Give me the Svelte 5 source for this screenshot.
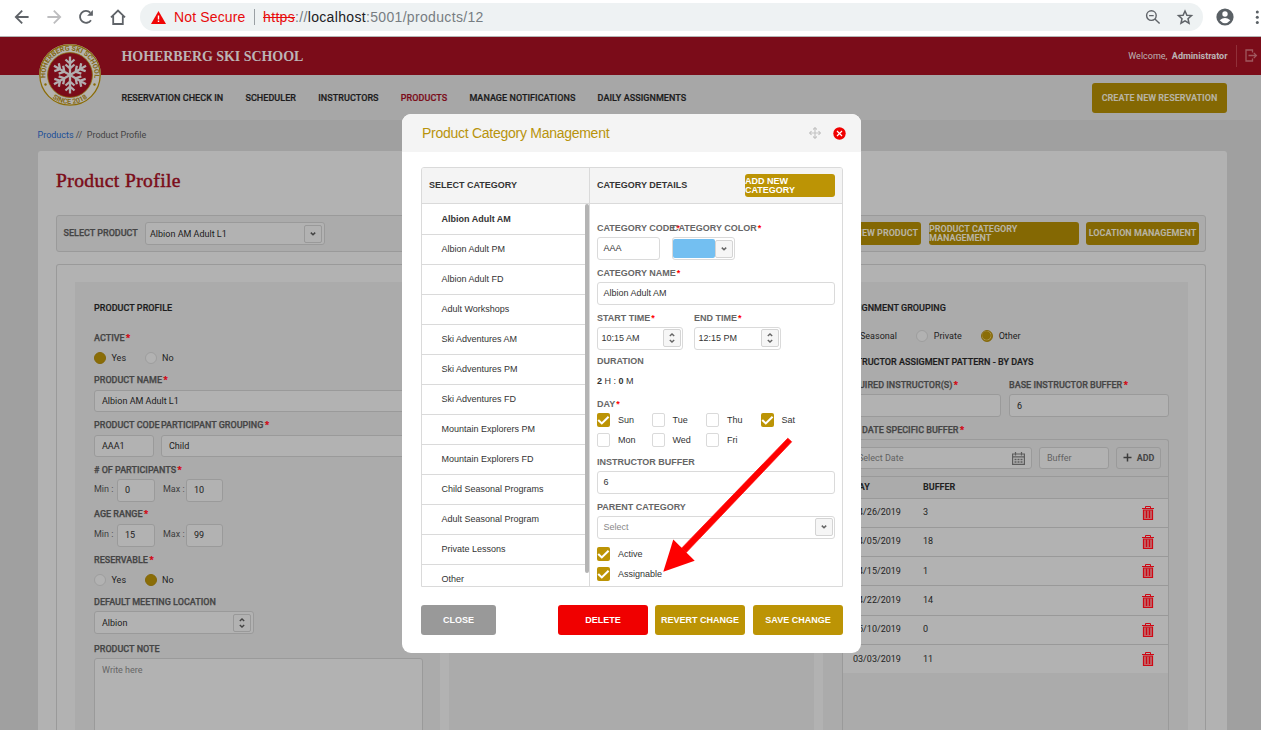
<script>
  const nav = [
    { label: 'RESERVATION CHECK IN' },
    { label: 'SCHEDULER' },
    { label: 'INSTRUCTORS' },
    { label: 'PRODUCTS', active: true },
    { label: 'MANAGE NOTIFICATIONS' },
    { label: 'DAILY ASSIGNMENTS' }
  ];
  const buffers = [
    ['04/26/2019', '3'],
    ['04/05/2019', '18'],
    ['04/15/2019', '1'],
    ['04/22/2019', '14'],
    ['05/10/2019', '0'],
    ['03/03/2019', '11']
  ];
  const categories = [
    'Albion Adult AM', 'Albion Adult PM', 'Albion Adult FD', 'Adult Workshops',
    'Ski Adventures AM', 'Ski Adventures PM', 'Ski Adventures FD', 'Mountain Explorers PM',
    'Mountain Explorers FD', 'Child Seasonal Programs', 'Adult Seasonal Program',
    'Private Lessons', 'Other'
  ];
  let selected = $state('Albion Adult AM');
  let days = $state([
    { name: 'Sun', on: true }, { name: 'Tue', on: false }, { name: 'Thu', on: false }, { name: 'Sat', on: true },
    { name: 'Mon', on: false }, { name: 'Wed', on: false }, { name: 'Fri', on: false }
  ]);
  const arms = [0, 60, 120, 180, 240, 300];
</script>

{#snippet label(text, required = true)}
  <div class="label">{text}{#if required}<b class="star">*</b>{/if}</div>
{/snippet}

{#snippet down()}
  <span class="knob"><svg width="8" height="6" viewBox="0 0 8 6"><path d="M1.8 1.6 4 3.7 6.2 1.6" fill="none" stroke="currentColor" stroke-width="1.5" /></svg></span>
{/snippet}

{#snippet updown()}
  <span class="knob"><svg width="8" height="12" viewBox="0 0 8 12"><path d="M1.8 4 4 1.900 6.2 4M1.8 8 4 10.1 6.2 8" fill="none" stroke="currentColor" stroke-width="1.4" /></svg></span>
{/snippet}

{#snippet radio(text, on, ring = false)}
  <span class="radio"><i class:on class:ring></i><span>{text}</span></span>
{/snippet}

{#snippet check(text, on)}
  <span class="check"><i class:on>
    {#if on}<svg width="13" height="14" viewBox="0 0 13 14"><path d="M1.2 6.900 4.800 10.400 11.600 3.800" fill="none" stroke="#fff" stroke-width="2.100" /></svg>{/if}
  </i><span>{text}</span></span>
{/snippet}

<div class="window">
  <div class="chrome">
    <svg class="tools" width="136" height="34" viewBox="0 0 136 34" fill="none" stroke="#5f6368" stroke-width="1.8">
      <path d="M28.6 17H16M22.2 10.6 15.8 17l6.4 6.4" />
      <path d="M47.4 17H60M53.8 10.6 60.2 17l-6.4 6.4" stroke="#bdbdbf" />
      <path d="M91 20.2a6 6 0 1 1-.7-7.6" />
      <path d="M92.9 10v5.8h-5.8z" fill="#5f6368" stroke="none" />
      <path d="M111 17.3 118 10.6l7 6.7M113.2 16v8h9.6v-8" />
    </svg>
    <div class="address">
      <svg width="15" height="13" viewBox="0 0 15 13"><path d="M7.5 0 15 13H0z" fill="#f00505" /><path d="M6.8 4.4h1.4v4H6.8zM6.8 9.6h1.4V11H6.8z" fill="#fff" /></svg>
      <span class="warn">Not Secure</span>
      <i class="bar"></i>
      <span class="url"><s>https</s>://<em>localhost</em>:5001/products/12</span>
      <svg class="right" width="50" height="20" viewBox="0 0 50 20" fill="none" stroke="#5f6368" stroke-width="1.4">
        <circle cx="6.4" cy="8.6" r="4.8" /><path d="m9.900 12 4.7 4.6M4.1 8.6h4.6" />
        <path d="m40 4 1.900 4.200 4.600.4-3.500 3.100 1 4.500-4-2.400-4 2.400 1-4.500-3.500-3.100 4.600-.4z" stroke-width="1.5" />
      </svg>
    </div>
    <svg width="58" height="34" viewBox="0 0 58 34" fill="#5a6065">
      <circle cx="22" cy="17" r="8.6" /><circle cx="22" cy="14" r="2.7" fill="#fff" /><path d="M16.7 20.2q5.3-4.6 10.6 0-5.300 6-10.6 0z" fill="#fff" />
      <circle cx="54.300" cy="12" r="1.5" /><circle cx="54.300" cy="17.2" r="1.5" /><circle cx="54.300" cy="22.500" r="1.5" />
    </svg>
  </div>

  <header>
    <svg class="logo" width="64" height="64" viewBox="-32 -32 64 64">
      <circle r="31" fill="#b5b3ae" /><circle r="30.2" fill="none" stroke="#8a6c08" stroke-width="1.3" />
      <circle r="22.400" fill="#7b0c19" stroke="#8a6c08" stroke-width=".8" />
      <path id="ring-top" d="M-24 5A24.500 24.500 0 1 1 24 5" fill="none" />
      <path id="ring-bottom" d="M-22 18.700A28.900 28.900 0 0 0 22 18.700" fill="none" />
      <text class="seal"><textPath href="#ring-top" startOffset="50%" text-anchor="middle">HOHERBERG SKI SCHOOL</textPath></text>
      <text class="seal"><textPath href="#ring-bottom" startOffset="50%" text-anchor="middle">SINCE 2018</textPath></text>
      <circle cx="-24.500" cy="9.500" r="1.200" fill="#8a6c08" /><circle cx="24.500" cy="9.500" r="1.200" fill="#8a6c08" />
      {#each arms as a}
        <path transform="rotate({a})" d="M0 0V-18.500M-4.500-15.500 0-11.500 4.500-15.500M-4.500-10.500 0-6.500 4.500-10.500" fill="none" stroke="#b2aeb0" stroke-width="2.300" />
      {/each}
    </svg>
    <span class="brand">HOHERBERG SKI SCHOOL</span>
    <span class="welcome">Welcome, &nbsp;<b>Administrator</b></span>
    <span class="exit">
      <svg width="13" height="13" viewBox="0 0 13 13" fill="none" stroke="#a0585f" stroke-width="1.300"><path d="M7.500 3.600V1H1v11h6.500V9.400M3.500 6.500H11M8.800 3.900l2.600 2.600-2.600 2.600" /></svg>
    </span>
  </header>

  <nav>
    {#each nav as item}<span class:active={item.active}>{item.label}</span>{/each}
    <button class="gold create">CREATE NEW RESERVATION</button>
  </nav>

  <main>
    <div class="crumbs"><a href="#products">Products</a> // &nbsp;Product Profile</div>
    <section class="card">
      <h1>Product Profile</h1>
      <div class="toolbar">
        <span class="label">SELECT PRODUCT</span>
        <div class="field product">Albion AM Adult L1{@render down()}</div>
        <button class="gold b1">ADD NEW PRODUCT</button>
        <button class="gold b2">PRODUCT CATEGORY MANAGEMENT</button>
        <button class="gold b3">LOCATION MANAGEMENT</button>
      </div>

      <div class="panel">
        <div class="col profile">
          <h2>PRODUCT PROFILE</h2>
          {@render label('ACTIVE')}
          <div class="radios">{@render radio('Yes', true)}{@render radio('No', false)}</div>
          {@render label('PRODUCT NAME')}
          <div class="field">Albion AM Adult L1</div>
          <div class="pair">{@render label('PRODUCT CODE', false)}{@render label('PARTICIPANT GROUPING')}</div>
          <div class="pair"><div class="field">AAA1</div><div class="field">Child</div></div>
          {@render label('# OF PARTICIPANTS')}
          <div class="range"><span>Min :</span><div class="field">0</div><span>Max :</span><div class="field">10</div></div>
          {@render label('AGE RANGE')}
          <div class="range"><span>Min :</span><div class="field">15</div><span>Max :</span><div class="field">99</div></div>
          {@render label('RESERVABLE')}
          <div class="radios">{@render radio('Yes', false)}{@render radio('No', true)}</div>
          {@render label('DEFAULT MEETING LOCATION', false)}
          <div class="field meeting">Albion{@render updown()}</div>
          {@render label('PRODUCT NOTE', false)}
          <div class="note">Write here</div>
        </div>

        <div class="col"></div>

        <div class="col assign">
          <h2>ASSIGNMENT GROUPING</h2>
          <div class="radios wide">{@render radio('Seasonal', false)}{@render radio('Private', false)}{@render radio('Other', true, true)}</div>
          <h2>INSTRUCTOR ASSIGMENT PATTERN - BY DAYS</h2>
          <div class="halves">{@render label('REQUIRED INSTRUCTOR(S)')}{@render label('BASE INSTRUCTOR BUFFER')}</div>
          <div class="halves"><div class="field"></div><div class="field">6</div></div>
          {@render label('ADD DATE SPECIFIC BUFFER')}
          <div class="dates">
            <div class="filter">
              <div class="field date">Select Date
                <svg width="13" height="13" viewBox="0 0 13 13" fill="none" stroke="#5c5c5c"><path d="M.6 2h11.800v10.400H.6zM.6 4.800h11.800M3.500 0v3.500M9.500 0v3.500" stroke-width="1.200" /><path d="M2.500 7.500h8M2.500 10h8" stroke-width="1.500" stroke-dasharray="2 1" /></svg>
              </div>
              <div class="field buf">Buffer</div>
              <button class="add"><svg width="9" height="9" viewBox="0 0 9 9"><path d="M4.500.5v8M.5 4.500h8" stroke="#3c3c3c" stroke-width="1.500" /></svg>ADD</button>
            </div>
            <div class="line head"><span>DAY</span><span>BUFFER</span></div>
            {#each buffers as [date, amount]}
              <div class="line">
                <span>{date}</span><span>{amount}</span>
                <svg width="12" height="14" viewBox="0 0 12 14" fill="none" stroke="#cf0713"><path d="M3.500 2V.5h5V2M0 2.500h12" /><path d="M1.500 4v9.500h9V4z" fill="#c0666a" stroke-width="1.200" /><path d="M4.500 4.500v7.500M7.500 4.500v7.500" stroke-width="1.300" /></svg>
              </div>
            {/each}
          </div>
        </div>
      </div>
    </section>
  </main>

  <div class="modal" role="dialog" aria-label="Product Category Management">
    <div class="title">
      <span>Product Category Management</span>
      <svg class="move" width="12" height="12" viewBox="0 0 12 12" fill="none" stroke="#c4c4c4" stroke-width="1.200"><path d="M6 1v10M1 6h10" /><path d="M4.200 2.500 6 .7l1.800 1.800M4.200 9.500 6 11.300l1.800-1.800M2.500 4.200.7 6l1.800 1.800M9.500 4.200 11.300 6 9.500 7.800" /></svg>
      <svg width="13" height="13" viewBox="0 0 13 13"><circle cx="6.500" cy="6.500" r="6.200" fill="#f00000" /><path d="m4 4 5 5M9 4 4 9" stroke="#fff" stroke-width="1.200" /></svg>
    </div>

    <div class="box">
      <div class="left">
        <div class="top">SELECT CATEGORY</div>
        <div class="list">
          {#each categories as name}
            <button class:selected={name === selected} onclick={() => (selected = name)}>{name}</button>
          {/each}
          <i class="thumb"></i>
        </div>
      </div>
      <div class="details">
        <div class="top">CATEGORY DETAILS<button class="gold">ADD NEW CATEGORY</button></div>
        <div class="form">
          <div class="codes">{@render label('CATEGORY CODE')}{@render label('CATEGORY COLOR')}</div>
          <div class="codes"><div class="field">AAA</div><div class="field swatch"><i></i>{@render down()}</div></div>
          {@render label('CATEGORY NAME')}
          <div class="field">Albion Adult AM</div>
          <div class="times">{@render label('START TIME')}{@render label('END TIME')}</div>
          <div class="times"><div class="field">10:15 AM{@render updown()}</div><div class="field">12:15 PM{@render updown()}</div></div>
          {@render label('DURATION', false)}
          <div class="duration"><b>2</b> H : <b>0</b> M</div>
          {@render label('DAY')}
          <div class="days">{#each days as day}{@render check(day.name, day.on)}{/each}</div>
          {@render label('INSTRUCTOR BUFFER', false)}
          <div class="field">6</div>
          {@render label('PARENT CATEGORY', false)}
          <div class="field select">Select{@render down()}</div>
          {@render check('Active', true)}
          {@render check('Assignable', true)}
        </div>
      </div>
    </div>

    <div class="actions">
      <button class="close">CLOSE</button>
      <button class="delete">DELETE</button>
      <button class="gold revert">REVERT CHANGE</button>
      <button class="gold">SAVE CHANGE</button>
    </div>
  </div>

  <svg class="arrow" width="132" height="137" viewBox="0 0 132 137"><path d="M124.800 3.200 128.700 6.800 23.200 117.600 18.600 113.200z" fill="#fe0000" stroke="#fe0000" stroke-width=".7" /><path d="M.3 136.700 10.300 104.500 31.700 125.700z" fill="#fe0000" /></svg>
</div>

<style>
  :global(body) { margin: 0; }
  .window { position: relative; width: 1261px; height: 730px; overflow: hidden; background: #a0a0a0; font: 9px/12px Roboto, sans-serif; color: #222; display: flex; flex-direction: column; }
  .window :global(*) { box-sizing: border-box; }
  button { border: 0; padding: 0; margin: 0; font: inherit; color: inherit; background: none; }
  i { font-style: normal; }
  svg { flex: none; display: block; }

  .chrome { height: 37px; flex: none; display: flex; background: #fff; border-bottom: 1px solid #b4b4b4; font: 14px/18px "Liberation Sans", sans-serif; }
  .tools { margin-right: 4px; }
  .address { flex: 1; height: 28px; margin-top: 3px; border-radius: 14px; background: #eef2f3; display: flex; align-items: center; padding-left: 11px; }
  .warn { color: #e80b0b; margin-left: 8px; letter-spacing: .15px; }
  .bar { width: 1px; height: 16px; background: #9aa0a4; margin: 0 8.500px 0 8px; }
  .url { color: #777d82; letter-spacing: .33px; }
  .url s { color: #e80b0b; }
  .url em { font-style: normal; color: #202124; }
  .right { margin: 0 8px 0 auto; }

  header { height: 38px; flex: none; background: #7b0c19; display: flex; align-items: center; padding-left: 37.500px; color: #bcb4b5; position: relative; }
  .logo { position: relative; z-index: 1; align-self: flex-start; margin-top: 6px; }
  .seal { font: 700 7px Roboto, sans-serif; fill: #836813; }
  .brand { font: 700 14px/20px "Liberation Serif", serif; margin: 2px 0 0 20px; letter-spacing: -.05px; }
  .welcome { margin-left: auto; margin-right: 8.500px; }
  .exit { width: 25px; height: 22px; border-left: 1px solid #913039; padding: 4px 0 0 8px; }
  nav { height: 45px; flex: none; background: #a7a7a7; display: flex; align-items: center; gap: 22.200px; padding: 0 34px 0 121.500px; font-weight: 500; color: #1c1c1c; letter-spacing: .05px; -webkit-text-stroke: .2px currentColor; }
  nav .active { color: #7b0c19; }
  .gold { background: #bc9405; color: #fff; font-weight: 700; border-radius: 3px; text-align: center; }
  nav .gold, .toolbar .gold { background: #846803; color: #b8b4a4; }
  .create { width: 135px; height: 30px; margin-left: auto; -webkit-text-stroke: 0; }

  main { flex: 1; padding: 9px 34px 0 38px; display: flex; flex-direction: column; min-height: 0; }
  .crumbs { height: 22px; color: #444; flex: none; margin-left: -.5px; }
  .crumbs a { color: #1b4f98; text-decoration: none; }
  .card { flex: 1; background: #b2b2b2; border-radius: 3px 3px 0 0; padding: 0 21px 0 18px; display: flex; flex-direction: column; min-height: 0; }
  h1 { margin: 0; height: 64px; flex: none; font: 400 19.500px/60px "Liberation Serif", serif; color: #7b0c19; letter-spacing: .42px; -webkit-text-stroke: .5px currentColor; }
  .toolbar { height: 37px; flex: none; border: 1px solid #9a9a9a; border-radius: 3px; background: #ababab; display: flex; align-items: center; padding: 0 6px; }
  .toolbar .label { width: 75px; align-self: center; margin: -1px 0 0 .5px; }
  .toolbar .product { width: 180px; margin: 0 auto 0 6.500px; padding: 0 2px 0 4px; align-self: center; }
  .toolbar .gold { height: 23px; line-height: 9px; }
  .toolbar .b1 { width: 96px; margin-right: 8px; text-align: right; padding-right: 3px; }
  .toolbar .b2 { width: 150px; margin-right: 7px; text-align: left; }
  .b3 { width: 113px; }
  .panel { flex: 1; min-height: 0; margin-top: 12px; border: 1px solid #9a9a9a; border-bottom: 0; border-radius: 3px 3px 0 0; padding: 17px 17px 0 18px; display: grid; grid-template-columns: 365px 365px 365px; gap: 9px; }
  .col { background: #ababab; overflow: hidden; min-height: 0; }
  h2 { margin: 0; font: 500 9px/12px Roboto, sans-serif; color: #1c1c1c; align-self: center; letter-spacing: .03px; -webkit-text-stroke: .2px currentColor; }
  .label { font-weight: 500; color: #454545; white-space: nowrap; align-self: end; -webkit-text-stroke: .25px currentColor; }
  .star { color: #d3000f; margin-left: 1.500px; }
  .field { height: 23px; border: 1px solid #9a9a9a; border-radius: 3px; background: #b2b2b2; padding: 0 2px 0 7px; display: flex; align-items: center; align-self: end; color: #1c1c1c; }
  .knob { width: 18px; height: 18px; margin-left: auto; border: 1px solid #999; border-radius: 2px; display: grid; place-items: center; color: #444; flex: none; }

  .profile { display: grid; padding: 18px 17px 0 19px; grid-template-rows: 16px 28px 28px 14px 26px 19px 26px 19px 26px 18px 27px 19px 27px 15px 26px 21px 90px; }
  .profile > .field, .profile .pair .field { height: 22px; }
  .pair { display: grid; grid-template-columns: 60px 1fr; column-gap: 7px; }
  .range { display: flex; align-items: center; color: #3c3c3c; }
  .range .field { width: 38px; padding-bottom: 1px; }
  .range span { width: 23px; white-space: nowrap; }
  .range span:nth-child(3) { margin-left: 8px; }
  .range .field:last-child { width: 37px; }
  .radios { display: flex; align-items: center; gap: 18.500px; }
  .radio { display: flex; align-items: center; gap: 5.500px; }
  .radio i { width: 12px; height: 12px; border-radius: 50%; border: 1px solid #9e9e9e; background: #b2b2b2; }
  .radio i.on { background: #8a6d07; border-color: #84670a; }
  .radio i.ring { background: radial-gradient(circle at 4.500px 4.500px, #8a6d07 3.800px, #a8924a 4.500px, #8a6d07 5.300px); }

  .profile .meeting { width: 160px; height: 23px; }
  .note { margin-top: 3px; width: 329px; border: 1px solid #9a9a9a; border-radius: 3px; background: #b2b2b2; padding: 5px 7px; color: #666; }

  .assign { display: grid; padding: 18px 19px 0 19px; grid-template-rows: 16px 40px 12px 23px 26px 19px 1fr; }
  .wide { gap: 19px; margin-top: -1px; }
  .wide .radio { gap: 6px; }
  .halves { display: grid; grid-template-columns: 159px 160px; column-gap: 8px; }
  .dates { margin-top: 3px; border: 1px solid #9a9a9a; border-bottom: 0; border-radius: 3px 3px 0 0; display: flex; flex-direction: column; }
  .filter { display: flex; height: 36px; flex: none; padding: 7px 7px 0; gap: 7px; }
  .filter .field, .add { height: 22px; align-self: flex-start; color: #626262; }
  .filter .date { flex: 1; justify-content: space-between; padding-right: 6.500px; }
  .buf { width: 70px; }
  .add { width: 45px; border: 1px solid #9a9a9a; border-radius: 3px; display: flex; align-items: center; justify-content: center; gap: 5px; padding-bottom: 1px; font-weight: 700; color: #454545 !important; }
  .line { height: 29.300px; flex: none; border-top: 1px solid #999; background: #b2b2b2; display: grid; grid-template-columns: 70px 1fr 26px; align-items: center; padding-left: 10px; }
  .line span { margin-top: -1px; }
  .head { height: 21.500px; background: #ababab; font-weight: 700; }

  .modal { position: absolute; left: 402px; top: 114px; width: 459px; height: 539px; background: #fff; border-radius: 9px; overflow: hidden; font-family: "Liberation Sans", sans-serif; color: #333; display: flex; flex-direction: column; }
  .title { height: 38px; flex: none; background: #f4f4f4; display: flex; align-items: center; padding: 0 15px 0 20px; font-size: 14px; letter-spacing: -.27px; color: #b8930c; }
  .move { margin: 0 12px 1px auto; }
  .box { height: 420px; flex: none; margin: 15px 18px 0 19px; border: 1px solid #dadada; border-radius: 3px 3px 0 0; display: grid; grid-template-columns: 168px 1fr; overflow: hidden; }
  .left, .details { min-height: 0; display: flex; flex-direction: column; }
  .left { border-right: 1px solid #dadada; }
  .top { height: 36px; flex: none; background: #f4f4f4; border-bottom: 1px solid #dadada; display: flex; align-items: center; padding: 0 7px 2px; font-weight: 700; }
  .top .gold { width: 90px; height: 23px; margin: 2px 0 0 auto; text-align: left; line-height: 9px; font-weight: 700; }
  .list { flex: 1; min-height: 0; overflow: hidden; position: relative; display: flex; flex-direction: column; padding: 1px 4px 0 0; }
  .list button { height: 30px; flex: none; text-align: left; padding: 0 0 1px 19.500px; border-bottom: 1px solid #dadada; }
  .list .selected { font-weight: 700; }
  .thumb { position: absolute; right: 0; top: 0; width: 4px; height: 369px; background: #b4b4b4; border-radius: 2px; }
  .form { padding: 0 7px; display: grid; grid-template-rows: 30px 26px 19px 26px 19px 26px 17px 28px 15px 40px 18px 26px 19px 26px 25px 20px; }
  .modal .label { color: #666; font-weight: 700; -webkit-text-stroke: 0; }
  .modal .star { color: #f00; margin-left: 1px; }
  .modal .field { background: #fff; border-color: #dadada; color: #333; padding: 0 1px 1px 5.500px; }
  .modal .knob { border-color: #d4d4d4; background: #f6f6f6; color: #666; }
  .codes { display: grid; grid-template-columns: 63px 63px; column-gap: 12px; }
  .modal .swatch { padding: 0 1px 0 0; }
  .swatch i { width: 41.500px; height: 19px; background: #73bff1; border-radius: 2px; }
  .times { display: grid; grid-template-columns: 86px 87px; column-gap: 11px; }
  .times .field { padding: 0 1px 1px 3.500px !important; }
  .duration { align-self: center; }
  .days { display: grid; grid-template-columns: 54.500px 54.500px 54.500px 54.500px; grid-auto-rows: 20px; }
  .check { display: flex; align-items: center; align-self: end; height: 20px; gap: 8px; }
  .check i { width: 13px; height: 14px; border: 1px solid #dadada; border-radius: 2px; }
  .check i.on { background: #bc9405; border: 0; }
  .modal .select { color: #888; }
  .actions { display: flex; height: 30px; margin: 18px 18px 0 19px; font-weight: 700; color: #fff; }
  .actions button { width: 90px; border-radius: 3px; margin-left: 8px; }
  .actions .revert { margin-left: 7px; }
  .actions .close { width: 75px; background: #999; margin: 0 auto 0 0; }
  .actions .delete { background: #f00000; }
  .arrow { position: absolute; left: 663px; top: 435px; }
</style>
